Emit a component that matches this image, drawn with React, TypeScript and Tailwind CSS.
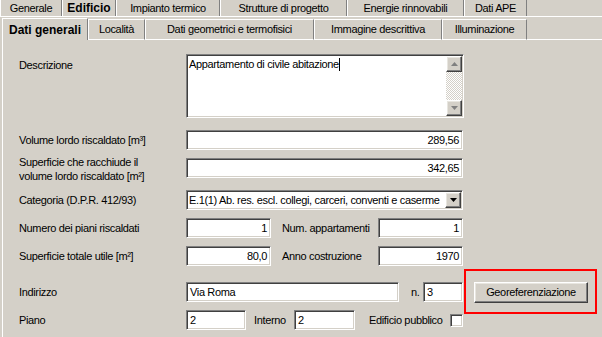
const sunken =
  "border border-t-[#808080] border-l-[#808080] border-b-white border-r-white shadow-[inset_1px_1px_0_#404040,inset_-1px_-1px_0_#d4d0c8] bg-white";
const raised =
  "border border-t-white border-l-white border-b-[#404040] border-r-[#404040] shadow-[inset_-1px_-1px_0_#808080,inset_1px_1px_0_#e8e6e0] bg-[#d4d0c8]";

const Field = ({ value = "", w, right = true }: { value?: string; w: string; right?: boolean }) => (
  <div className={`${sunken} ${w} h-[20px] shrink-0 flex items-center px-[3px] ${right ? "justify-end" : ""}`}>
    <span className="leading-none">{value}</span>
  </div>
);

const topTabs = [
  { label: "Generale", w: "w-[62px]" },
  { label: "Edificio", w: "w-[54px]", active: true },
  { label: "Impianto termico", w: "w-[104px]" },
  { label: "Strutture di progetto", w: "w-[127px]" },
  { label: "Energie rinnovabili", w: "w-[117px]" },
  { label: "Dati APE", w: "w-[63px]" },
];

const subTabs = [
  { label: "Dati generali", w: "w-[86px]", active: true },
  { label: "Località", w: "w-[57px]" },
  { label: "Dati geometrici e termofisici", w: "w-[169px]" },
  { label: "Immagine descrittiva", w: "w-[128px]" },
  { label: "Illuminazione", w: "w-[85px]" },
];

const App = () => {
  return (
    <div className="relative w-[602px] h-[337px] overflow-hidden bg-[#d4d0c8] text-black text-[11px] tracking-[-0.35px] font-['Liberation_Sans',Arial,sans-serif]">
      {/* top tab row */}
      <div className="flex h-[17px] border-b border-white">
        {topTabs.map((t) => (
          <div
            key={t.label}
            className={`${t.w} flex items-center justify-center border-l border-l-white border-r border-r-[#808080] ${
              t.active ? "font-bold text-[12px] tracking-normal bg-[#d4d0c8]" : ""
            }`}
          >
            {t.label}
          </div>
        ))}
      </div>

      {/* sub tab row */}
      <div className="flex h-[21px] mt-[2px]">
        {subTabs.map((t) => (
          <div
            key={t.label}
            className={`${t.w} flex items-center justify-center border-t border-t-white border-l border-l-white border-r border-r-[#808080] ${
              t.active ? "font-bold text-[12px] tracking-normal ml-[2px] -mt-[1px]" : "border-b border-b-white"
            }`}
          >
            {t.label}
          </div>
        ))}
        <div className="flex-1 border-b border-b-white" />
      </div>

      {/* panel */}
      <div className="ml-[2px] border-l border-l-white h-full pl-[16px] pt-[14px] flex flex-col">
        <div className="flex">
          <div className="w-[167px] pt-[3px]">Descrizione</div>
          <div className={`${sunken} w-[278px] h-[64px] flex`}>
            <div className="flex-1 px-[2px] pt-[3px] flex items-start">
              <span className="leading-[12px]">Appartamento di civile abitazione</span>
              <span className="w-px h-[13px] bg-black" />
            </div>
            <div className="w-[16px] flex flex-col my-px mr-px">
              <div className={`${raised} h-[16px] flex items-center justify-center`}>
                <svg width="7" height="4" viewBox="0 0 7 4">
                  <path d="M3.5 0L7 4H0Z" fill="#808080" />
                </svg>
              </div>
              <div className="flex-1 bg-[repeating-conic-gradient(#ffffff_0_25%,#d4d0c8_0_50%)] bg-[length:2px_2px]" />
              <div className={`${raised} h-[16px] flex items-center justify-center`}>
                <svg width="7" height="4" viewBox="0 0 7 4">
                  <path d="M0 0H7L3.5 4Z" fill="#808080" />
                </svg>
              </div>
            </div>
          </div>
        </div>

        <div className="flex items-center h-[20px] mt-[12px]">
          <div className="w-[167px]">Volume lordo riscaldato [m³]</div>
          <Field value="289,56" w="w-[277px]" />
        </div>

        <div className="flex items-center h-[20px] mt-[8px]">
          <div className="w-[167px] leading-[14px] pt-[1px]">
            Superficie che racchiude il
            <br />
            volume lordo riscaldato [m²]
          </div>
          <Field value="342,65" w="w-[277px]" />
        </div>

        <div className="flex items-center h-[20px] mt-[12px]">
          <div className="w-[167px]">Categoria (D.P.R. 412/93)</div>
          <div className={`${sunken} w-[277px] h-[20px] flex items-center`}>
            <span className="flex-1 pl-[2px] whitespace-nowrap overflow-hidden">
              E.1(1) Ab. res. escl. collegi, carceri, conventi e caserme
            </span>
            <div className={`${raised} w-[16px] h-[16px] mr-px shrink-0 flex items-center justify-center`}>
              <svg width="7" height="4" viewBox="0 0 7 4">
                <path d="M0 0H7L3.5 4Z" fill="#000" />
              </svg>
            </div>
          </div>
        </div>

        <div className="flex items-center h-[20px] mt-[8px]">
          <div className="w-[167px]">Numero dei piani riscaldati</div>
          <Field value="1" w="w-[85px]" />
          <div className="w-[107px] pl-[11px]">Num. appartamenti</div>
          <Field value="1" w="w-[85px]" />
        </div>

        <div className="flex items-center h-[20px] mt-[8px]">
          <div className="w-[167px]">Superficie totale utile [m²]</div>
          <Field value="80,0" w="w-[85px]" />
          <div className="w-[107px] pl-[11px]">Anno costruzione</div>
          <Field value="1970" w="w-[85px]" />
        </div>

        <div className="flex items-center h-[20px] mt-[16px]">
          <div className="w-[167px]">Indirizzo</div>
          <Field value="Via Roma" w="w-[213px]" right={false} />
          <div className="w-[24px] pl-[12px]">n.</div>
          <Field value="3" w="w-[40px]" right={false} />
          <button className={`${raised} ml-[11px] w-[114px] h-[21px] flex items-center justify-center`}>
            Georeferenziazione
          </button>
        </div>

        <div className="flex items-center h-[20px] mt-[8px]">
          <div className="w-[167px]">Piano</div>
          <Field value="2" w="w-[60px]" right={false} />
          <div className="w-[48px] pl-[8px]">Interno</div>
          <Field value="2" w="w-[61px]" right={false} />
          <div className="pl-[14px] w-[95px]">Edificio pubblico</div>
          <div className={`${sunken} w-[13px] h-[13px]`} />
        </div>
      </div>

      {/* annotation highlight */}
      <div className="absolute left-[464px] top-[269px] w-[133px] h-[45px] border-2 border-[#ff0000]" />
    </div>
  );
};

export default App;
